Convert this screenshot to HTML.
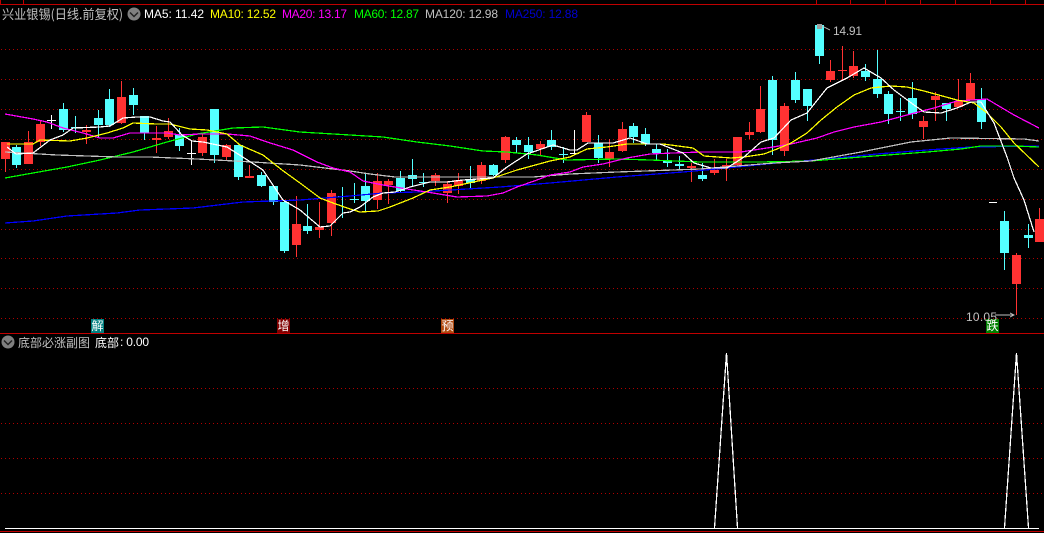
<!DOCTYPE html>
<html><head><meta charset="utf-8"><style>
html,body{margin:0;padding:0;background:#000;width:1044px;height:533px;overflow:hidden}
svg{display:block}
text{font-family:"Liberation Sans","WenQuanYi Zen Hei",sans-serif;font-size:12px}
.c{font-family:"WenQuanYi Zen Hei","Noto Sans CJK SC",sans-serif}
</style></head><body>
<svg width="1044" height="533" viewBox="0 0 1044 533" xmlns="http://www.w3.org/2000/svg">
<defs><pattern id="d" x="1" y="0" width="4" height="1" patternUnits="userSpaceOnUse"><rect width="1" height="1" fill="#b00000"/></pattern></defs>
<rect width="1044" height="533" fill="#000"/>
<g shape-rendering="crispEdges">
<rect x="0" y="4" width="1044" height="1" fill="#c00000"/>
<path fill="#c00000" d="M0 0h1v4h-1zM23 0h1v4h-1zM816 0h1v4h-1zM850 0h1v4h-1zM885 0h1v4h-1zM920 0h1v4h-1zM955 0h1v4h-1zM990 0h1v4h-1zM1025 0h1v4h-1z"/>
<g fill="url(#d)">
<rect x="1" y="49" width="1043" height="1"/><rect x="1" y="79" width="1043" height="1"/><rect x="1" y="109" width="1043" height="1"/><rect x="1" y="139" width="1043" height="1"/><rect x="1" y="169" width="1043" height="1"/><rect x="1" y="199" width="1043" height="1"/><rect x="1" y="229" width="1043" height="1"/><rect x="1" y="258" width="1043" height="1"/><rect x="1" y="288" width="1043" height="1"/><rect x="1" y="318" width="1043" height="1"/><rect x="1" y="388" width="1043" height="1"/><rect x="1" y="423" width="1043" height="1"/><rect x="1" y="458" width="1043" height="1"/><rect x="1" y="493" width="1043" height="1"/>
</g>
<rect x="0" y="333" width="1044" height="1" fill="#c00000"/>
<rect x="0" y="531" width="1044" height="1" fill="#c00000"/>

<path fill="#ff3232" d="M5 142h1V172h-1zM1 142h9V159h-9zM28 131h1V164h-1zM24 142h9V164h-9zM40 121h1V146h-1zM36 124h9V142h-9zM86 125h1V144h-1zM82 130h9V132h-9zM121 81h1V124h-1zM117 97h9V123h-9zM156 126h1V153h-1zM152 138h9V140h-9zM168 118h1V139h-1zM164 131h9V137h-9zM202 134h1V156h-1zM198 137h9V153h-9zM226 144h1V161h-1zM222 145h9V157h-9zM249 165h1V178h-1zM245 176h9V178h-9zM296 196h1V257h-1zM292 224h9V245h-9zM319 202h1V238h-1zM315 227h9V230h-9zM331 190h1V236h-1zM327 193h9V223h-9zM377 173h1V209h-1zM373 181h9V200h-9zM388 179h1V204h-1zM384 181h9V185h-9zM435 173h1V186h-1zM431 175h9V181h-9zM447 181h1V203h-1zM443 184h9V193h-9zM458 173h1V194h-1zM454 180h9V186h-9zM481 162h1V184h-1zM477 165h9V181h-9zM505 136h1V163h-1zM501 137h9V160h-9zM540 141h1V156h-1zM536 144h9V149h-9zM586 112h1V142h-1zM582 115h9V142h-9zM609 139h1V167h-1zM605 152h9V159h-9zM622 122h1V152h-1zM618 129h9V151h-9zM691 163h1V182h-1zM687 166h9V168h-9zM714 159h1V175h-1zM710 170h9V173h-9zM726 159h1V181h-1zM722 165h9V168h-9zM737 137h1V166h-1zM733 137h9V165h-9zM749 122h1V139h-1zM745 132h9V135h-9zM760 86h1V133h-1zM756 109h9V132h-9zM784 103h1V156h-1zM780 106h9V151h-9zM830 60h1V82h-1zM826 71h9V80h-9zM842 46h1V81h-1zM838 70h9V71h-9zM853 51h1V78h-1zM849 66h9V76h-9zM923 116h1V139h-1zM919 121h9V127h-9zM935 92h1V121h-1zM931 96h9V100h-9zM958 79h1V107h-1zM954 101h9V107h-9zM970 73h1V100h-1zM966 83h9V100h-9zM1016 253h1V315h-1zM1012 255h9V284h-9zM1039 208h1V242h-1zM1035 219h9V242h-9z"/>

<path fill="#54ffff" d="M16 145h1V168h-1zM12 147h9V165h-9zM63 103h1V132h-1zM59 109h9V130h-9zM75 116h1V133h-1zM71 127h9V128h-9zM98 110h1V137h-1zM94 118h9V125h-9zM109 89h1V127h-1zM105 99h9V125h-9zM133 88h1V115h-1zM129 95h9V105h-9zM144 116h1V140h-1zM140 116h9V133h-9zM179 128h1V151h-1zM175 135h9V146h-9zM214 109h1V163h-1zM210 109h9V155h-9zM238 145h1V180h-1zM234 145h9V177h-9zM261 172h1V187h-1zM257 175h9V186h-9zM273 185h1V205h-1zM269 186h9V202h-9zM284 201h1V253h-1zM280 202h9V251h-9zM307 204h1V234h-1zM303 226h9V231h-9zM342 187h1V218h-1zM338 196h9V197h-9zM354 183h1V203h-1zM350 199h9V200h-9zM365 174h1V212h-1zM361 186h9V201h-9zM400 171h1V193h-1zM396 178h9V191h-9zM412 159h1V186h-1zM408 175h9V179h-9zM423 173h1V187h-1zM419 182h9V183h-9zM470 166h1V188h-1zM466 180h9V183h-9zM493 164h1V176h-1zM489 165h9V175h-9zM516 137h1V153h-1zM512 140h9V145h-9zM528 137h1V159h-1zM524 145h9V152h-9zM551 130h1V150h-1zM547 140h9V147h-9zM563 147h1V163h-1zM559 154h9V155h-9zM598 135h1V163h-1zM594 143h9V158h-9zM633 123h1V143h-1zM629 126h9V137h-9zM645 128h1V146h-1zM641 134h9V144h-9zM656 144h1V160h-1zM652 149h9V153h-9zM667 149h1V167h-1zM663 161h9V163h-9zM679 156h1V169h-1zM675 164h9V166h-9zM702 163h1V181h-1zM698 175h9V179h-9zM772 76h1V155h-1zM768 80h9V140h-9zM795 72h1V103h-1zM791 80h9V100h-9zM807 89h1V121h-1zM803 89h9V106h-9zM819 25h1V64h-1zM815 25h9V56h-9zM865 64h1V81h-1zM861 71h9V77h-9zM877 50h1V98h-1zM873 79h9V94h-9zM888 91h1V124h-1zM884 94h9V114h-9zM900 98h1V121h-1zM896 111h9V112h-9zM912 82h1V119h-1zM908 98h9V114h-9zM946 103h1V121h-1zM942 103h9V109h-9zM981 88h1V129h-1zM977 99h9V122h-9zM1004 211h1V270h-1zM1000 221h9V253h-9zM1028 224h1V248h-1zM1024 235h9V238h-9z"/>

<path fill="#fff" d="M51 115h1V129h-1zM47 120h9V121h-9zM191 140h1V165h-1zM187 153h9V154h-9zM574 130h1V155h-1zM570 153h9V154h-9zM989 202h8v1h-8z"/>

<g fill="none" stroke-width="1.25">
<polyline stroke="#0000ff" points="5,223 33,221 67,216 117,213 140,210 193,208 243,202 300,200 350,196 383,193 417,192 467,189 500,187 550,183 617,177 683,172 727,168 777,163 827,159 877,154 927,150 971,147 1039,146"/>
<polyline stroke="#00ff00" points="5,178 33,173 67,167 100,160 133,152 167,142 197,134 233,128 263,127 300,132 350,135 383,137 417,142 450,146 483,151 507,152 537,155 567,160 617,159 650,160 700,162 761,162 811,161 861,157 927,152 961,149 981,146 1014,146 1039,147"/>
<polyline stroke="#c0c0c0" points="5,152 57,155 117,157 150,157 197,159 253,162 300,165 350,171 370,174 395,177 417,177 533,177 570,174 617,172 673,170 700,169 774,163 811,161 861,152 911,142 951,138 1024,139 1039,141"/>
<polyline stroke="#ff00ff" points="5,114 33,119 47,122 63,128 83,133 100,138 113,138 130,133 167,133 180,135 200,134 227,134 250,136 267,142 293,150 317,162 333,168 350,172 363,181 383,185 407,189 433,193 457,197 487,196 503,193 517,187 537,180 550,175 570,172 583,167 603,164 627,158 650,154 673,153 701,152 741,152 767,148 791,144 817,138 834,132 854,127 881,122 907,115 934,108 957,101 987,99 1014,115 1039,128"/>
<polyline stroke="#ffff00" points="7,144 33,144 40,140 70,141 87,138 107,133 123,128 133,123 157,124 170,124 190,129 207,130 227,134 240,145 263,155 282,170 300,183 320,198 333,203 350,209 360,212 378,211 390,207 413,198 430,190 450,187 483,180 493,178 517,170 550,161 570,157 587,149 607,147 627,144 663,144 693,148 704,156 731,158 744,157 764,154 777,149 791,143 807,133 821,120 837,107 854,95 871,88 891,86 907,87 924,91 957,100 974,103 987,113 1001,127 1014,143 1039,167"/>
<polyline stroke="#ffffff" points="7,147 16,154 33,153 50,140 63,135 73,128 100,127 110,126 123,118 137,117 150,117 163,121 170,122 182,135 192,141 203,142 227,147 238,154 263,170 283,200 300,210 320,227 330,226 343,213 350,212 360,207 373,197 383,193 395,192 410,187 430,182 447,182 463,180 493,178 507,167 527,154 553,145 570,150 577,150 588,143 613,143 630,138 647,144 660,144 683,153 694,163 711,168 727,168 744,157 761,142 774,138 791,120 807,113 827,88 847,78 864,68 881,78 894,90 914,105 924,112 941,113 957,108 971,102 981,102 994,123 1007,157 1014,178 1024,200 1034,232"/>
</g>

<g fill="none" stroke="#c0c0c0"><polyline points="822,26 830,30"/><polyline points="995,315 1014,315"/><polyline points="1010,313 1014,315 1010,317"/></g>
<rect x="817" y="24" width="5" height="5" fill="#a0a0a0"/>

<rect x="5" y="528" width="1034" height="1" fill="#fff"/>
<g fill="none" stroke="#fff" stroke-width="1.25"><polyline points="714.5,528 726.5,353 737.5,528"/><polyline points="1004.5,528 1016.5,353 1028.5,528"/></g>

<rect x="91" y="319" width="13" height="14" fill="#008080"/>
<rect x="277" y="319" width="13" height="14" fill="#800000"/>
<rect x="441" y="319" width="13" height="14" fill="#b04a10"/>
<rect x="986" y="319" width="13" height="14" fill="#008000"/>
</g>

<circle cx="134" cy="14" r="6.5" fill="#808080"/><polyline points="130,12.5 134,16.5 138,12.5" fill="none" stroke="#222" stroke-width="1.5"/>
<circle cx="8" cy="342" r="6.5" fill="#808080"/><polyline points="4,340.5 8,344.5 12,340.5" fill="none" stroke="#222" stroke-width="1.5"/>

<text class="c" x="2" y="19" fill="#c0c0c0" textLength="121" lengthAdjust="spacingAndGlyphs" style="font-size:13px">兴业银锡(日线.前复权)</text>
<text x="144" y="18" fill="#fff" textLength="60">MA5: 11.42</text>
<text x="210" y="18" fill="#ffff00" textLength="66">MA10: 12.52</text>
<text x="282" y="18" fill="#ff00ff" textLength="65">MA20: 13.17</text>
<text x="354" y="18" fill="#00ff00" textLength="65">MA60: 12.87</text>
<text x="425" y="18" fill="#c0c0c0" textLength="73">MA120: 12.98</text>
<text x="505" y="18" fill="#0000d0" textLength="73">MA250: 12.88</text>
<text x="833" y="35" fill="#c0c0c0" textLength="29">14.91</text>
<text x="966" y="321" fill="#c0c0c0" textLength="31">10.05</text>
<text class="c" x="18" y="347" fill="#c0c0c0" style="font-size:12px" textLength="72">底部必涨副图</text>
<text class="c" x="95" y="347" fill="#fff" style="font-size:12px">底部</text>
<text x="120" y="346" fill="#fff" textLength="29">: 0.00</text>
<g class="c" fill="#fff">
<text class="c" x="91.5" y="330" fill="#fff">解</text>
<text class="c" x="277.5" y="330" fill="#fff">增</text>
<text class="c" x="441.5" y="330" fill="#fff">预</text>
<text class="c" x="986.5" y="330" fill="#fff">跌</text>
</g>
</svg>
</body></html>
